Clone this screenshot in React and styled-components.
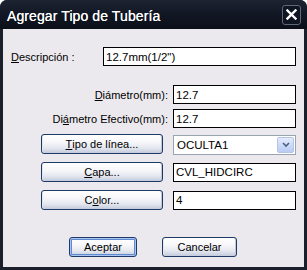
import React from 'react';
import styled, { createGlobalStyle } from 'styled-components';

const Global = createGlobalStyle`
  html, body {
    margin: 0;
    padding: 0;
    background: #ffffff;
  }
  body {
    width: 307px;
    height: 270px;
    overflow: hidden;
  }
`;

const Window = styled.div`
  width: 307px;
  height: 270px;
  display: flex;
  flex-direction: column;
  background: #151a25;
  border-radius: 7px 7px 0 0;
  overflow: hidden;
  font-family: "Liberation Sans", Arial, sans-serif;
`;

const TitleBar = styled.div`
  height: 29px;
  flex: none;
  display: flex;
  align-items: center;
  justify-content: space-between;
  padding: 0 6px 0 7px;
  background: linear-gradient(#1d2332 0%, #121724 50%, #0b0f18 100%);
`;

const Title = styled.span`
  color: #ffffff;
  font-size: 14px;
  letter-spacing: 0.1px;
  padding-top: 2px;
  text-shadow: 0 0 0.4px #fff;
`;

const CloseButton = styled.div`
  width: 17px;
  height: 18px;
  display: flex;
  align-items: center;
  justify-content: center;
  border: 1px solid #5f6778;
  border-radius: 3px;
  background: #101522;
`;

const Frame = styled.div`
  flex: 1;
  display: flex;
  padding: 0 3px 3px 3px;
  background: #1a1f2b;
`;

const Client = styled.div`
  flex: 1;
  display: flex;
  flex-direction: column;
  background: #ece9ee;
  font-size: 11px;
  color: #000;
`;

const DescRow = styled.div`
  display: grid;
  grid-template-columns: 92px 193px;
  align-items: center;
  margin-top: 18px;
  padding-left: 8px;
`;

const Label = styled.span`
  white-space: nowrap;
  text-align: ${p => (p.$right ? 'right' : 'left')};
  margin-right: ${p => (p.$right ? '-5px' : '0')};
`;

const Field = styled.div`
  height: 19px;
  box-sizing: border-box;
  border: 1px solid #000;
  background: #fff;
  display: flex;
  align-items: center;
  padding: 0 2px;
  font-size: 11.5px;
  white-space: nowrap;
  overflow: hidden;
`;

const FieldRow = styled.div`
  display: grid;
  grid-template-columns: 122px 123px;
  column-gap: 10px;
  align-items: center;
  margin-left: 38px;
  margin-top: ${p => p.$mt}px;
`;

const PushButton = styled.div`
  height: ${p => p.$h || 20}px;
  box-sizing: border-box;
  display: flex;
  align-items: center;
  justify-content: center;
  border: 1px solid #1d3a67;
  border-radius: 3px;
  background: linear-gradient(#ffffff 0%, #f7f7fa 40%, #e4e7ef 72%, #c3cadc 100%);
  box-shadow: ${p =>
    p.$default
      ? 'inset 0 0 0 1px #a9c4ef, inset 0 0 0 2px #5f89d0'
      : 'inset 1px 0 0 #e4e8f0, inset -1px 0 0 #c2c8d6'};
  width: ${p => (p.$w ? `${p.$w}px` : 'auto')};
  white-space: nowrap;
`;

const Combo = styled.div`
  height: 20px;
  box-sizing: border-box;
  border: 1px solid #9aa3b0;
  background: #fff;
  display: flex;
  align-items: center;
  justify-content: space-between;
  padding: 1px 1px 1px 3px;
  font-size: 11.5px;
  margin-top: 2px;
`;

const ComboArrow = styled.div`
  width: 17px;
  height: 16px;
  box-sizing: border-box;
  border: 1px solid #b2c4e8;
  border-radius: 2px;
  background: linear-gradient(#e3ebfc, #b9cbf3);
  display: flex;
  align-items: center;
  justify-content: center;
`;

const Actions = styled.div`
  display: flex;
  gap: 25px;
  margin-top: auto;
  margin-bottom: 10px;
  padding-left: 66px;
`;

export default function App() {
  return (
    <>
      <Global />
      <Window>
        <TitleBar>
          <Title>Agregar Tipo de Tubería</Title>
          <CloseButton>
            <svg width="11" height="11" viewBox="0 0 11 11">
              <path d="M1.5 1.5 L9.5 9.5 M9.5 1.5 L1.5 9.5" stroke="#fff" strokeWidth="2.4" strokeLinecap="square" />
            </svg>
          </CloseButton>
        </TitleBar>
        <Frame>
          <Client>
            <DescRow>
              <Label><u>D</u>escripción :</Label>
              <Field>12.7mm(1/2")</Field>
            </DescRow>

            <FieldRow $mt={19}>
              <Label $right><u>D</u>iámetro(mm):</Label>
              <Field>12.7</Field>
            </FieldRow>
            <FieldRow $mt={5}>
              <Label $right>Di<u>á</u>metro Efectivo(mm):</Label>
              <Field>12.7</Field>
            </FieldRow>

            <FieldRow $mt={5}>
              <PushButton><u>T</u>ipo de línea...</PushButton>
              <Combo>
                <span>OCULTA1</span>
                <ComboArrow>
                  <svg width="8" height="6" viewBox="0 0 8 6">
                    <path d="M1 1 L4 4 L7 1" stroke="#4d6185" strokeWidth="1.6" fill="none" />
                  </svg>
                </ComboArrow>
              </Combo>
            </FieldRow>
            <FieldRow $mt={7}>
              <PushButton><u>C</u>apa...</PushButton>
              <Field>CVL_HIDCIRC</Field>
            </FieldRow>
            <FieldRow $mt={8}>
              <PushButton>C<u>o</u>lor...</PushButton>
              <Field>4</Field>
            </FieldRow>

            <Actions>
              <PushButton $default $w={68}>Aceptar</PushButton>
              <PushButton $w={75}>Cancelar</PushButton>
            </Actions>
          </Client>
        </Frame>
      </Window>
    </>
  );
}
